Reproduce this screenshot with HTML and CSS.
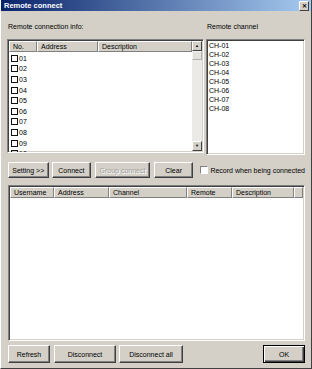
FILE: index.html
```html
<!DOCTYPE html>
<html lang="en">
<head>
    <meta charset="UTF-8">
    <title>Remote connect</title>
    <link rel="stylesheet" href="styles.css">
</head>
<body>
    <div class="window">
        <div class="titlebar">
            <span class="title">Remote connect</span>
            <span class="close">&#x2715;</span>
        </div>

        <div class="content">
            <div class="top">
                <div class="col-left">
                    <div class="label">Remote connection info:</div>
                    <div class="listbox list-info">
                        <div class="grid">
                            <div class="header">
                                <div class="hcell w-no">No.</div>
                                <div class="hcell w-addr">Address</div>
                                <div class="hcell w-desc">Description</div>
                            </div>
                            <div class="rows">
                                <div class="row"><span class="check"></span>01</div>
                                <div class="row"><span class="check"></span>02</div>
                                <div class="row"><span class="check"></span>03</div>
                                <div class="row"><span class="check"></span>04</div>
                                <div class="row"><span class="check"></span>05</div>
                                <div class="row"><span class="check"></span>06</div>
                                <div class="row"><span class="check"></span>07</div>
                                <div class="row"><span class="check"></span>08</div>
                                <div class="row"><span class="check"></span>09</div>
                                <div class="row"><span class="check"></span>10</div>
                            </div>
                        </div>
                        <div class="scrollbar">
                            <div class="sb-btn">&#9650;</div>
                            <div class="sb-thumb"></div>
                            <div class="sb-track"></div>
                            <div class="sb-btn">&#9660;</div>
                        </div>
                    </div>
                </div>
                <div class="col-right">
                    <div class="label">Remote channel</div>
                    <div class="listbox list-channel">
                        <div class="ch">CH-01</div>
                        <div class="ch">CH-02</div>
                        <div class="ch">CH-03</div>
                        <div class="ch">CH-04</div>
                        <div class="ch">CH-05</div>
                        <div class="ch">CH-06</div>
                        <div class="ch">CH-07</div>
                        <div class="ch">CH-08</div>
                    </div>
                </div>
            </div>

            <div class="btn-row">
                <button class="btn b-setting">Setting &gt;&gt;</button>
                <button class="btn b-connect">Connect</button>
                <button class="btn b-group" disabled>Group connect</button>
                <button class="btn b-clear">Clear</button>
                <label class="record"><span class="box"></span>Record when being connected</label>
            </div>

            <div class="listbox list-users">
                <div class="header">
                    <div class="hcell u-user">Username</div>
                    <div class="hcell u-addr">Address</div>
                    <div class="hcell u-chan">Channel</div>
                    <div class="hcell u-remote">Remote</div>
                    <div class="hcell u-desc">Description</div>
                    <div class="hcell u-rest"></div>
                </div>
            </div>

            <div class="footer">
                <button class="btn f-refresh">Refresh</button>
                <button class="btn f-disc">Disconnect</button>
                <button class="btn f-discall">Disconnect all</button>
                <div class="spacer"></div>
                <button class="btn f-ok">OK</button>
            </div>
        </div>
    </div>
</body>
</html>
```

FILE: styles.css
```css
body {
    margin: 0;
    font-family: "Liberation Sans", Arial, sans-serif;
    font-size: 7px;
    color: #000;
}
.window {
    width: 312px;
    height: 369px;
    background-color: #d4d0c8;
    box-sizing: border-box;
    border-left: 1px solid #ffffff;
    border-right: 1px solid #404040;
    border-bottom: 1px solid #404040;
}
.titlebar {
    height: 11px;
    display: flex;
    align-items: center;
    justify-content: space-between;
    padding: 0 2px 0 3px;
    background: linear-gradient(to right, #0a246a, #a6caf0);
}
.title {
    color: #fff;
    font-weight: bold;
    font-size: 7.5px;
}
.close {
    width: 8px;
    height: 8px;
    background-color: #d4d0c8;
    border: 1px solid;
    border-color: #fff #404040 #404040 #fff;
    font-size: 6px;
    line-height: 8px;
    text-align: center;
    font-weight: bold;
}
.content {
    padding: 0 6px 0 6px;
    display: flex;
    flex-direction: column;
}
.top {
    display: flex;
    gap: 2px;
    align-items: flex-start;
}
.label {
    height: 10px;
    line-height: 10px;
    margin-top: 11px;
    margin-bottom: 7px;
    padding-left: 1px;
}
.col-left {
    width: 197px;
}
.col-right {
    width: 99px;
}
.listbox {
    background-color: #fff;
    box-sizing: border-box;
    border: 1px solid;
    border-color: #808080 #fff #fff #808080;
    box-shadow: inset 1px 1px 0 #404040, inset -1px -1px 0 #d4d0c8;
    padding: 1px;
}
.list-info {
    height: 114px;
    display: flex;
    overflow: hidden;
}
.grid {
    flex: 1;
}
.header {
    display: flex;
    height: 11px;
}
.hcell {
    box-sizing: border-box;
    background-color: #d4d0c8;
    border: 1px solid;
    border-color: #fff #808080 #808080 #fff;
    padding-left: 3px;
    line-height: 9px;
    white-space: nowrap;
    overflow: hidden;
}
.w-no { width: 28px; }
.w-addr { width: 61px; }
.w-desc { flex: 1; }
.rows {
    padding-top: 1px;
}
.row {
    height: 10.6px;
    display: flex;
    align-items: center;
    padding-left: 2px;
}
.check {
    width: 7px;
    height: 7px;
    box-sizing: border-box;
    border: 1.5px solid #111;
    margin-right: 1px;
}
.scrollbar {
    width: 10px;
    display: flex;
    flex-direction: column;
}
.sb-btn, .sb-thumb {
    box-sizing: border-box;
    background-color: #d4d0c8;
    border: 1px solid;
    border-color: #fff #404040 #404040 #fff;
    height: 10px;
    font-size: 4px;
    line-height: 8px;
    text-align: center;
}
.sb-thumb {
    height: 9px;
    background-color: #e4e2dc;
    border-color: #f4f4f4 #b0b0b0 #b0b0b0 #f4f4f4;
}
.sb-track {
    flex: 1;
    background-color: #eceae6;
}
.list-channel {
    height: 116px;
    padding: 1px 2px;
}
.ch {
    height: 9px;
    line-height: 9px;
}
.btn-row {
    display: flex;
    align-items: center;
    margin-top: 7px;
    height: 16px;
}
.btn {
    font-family: "Liberation Sans", Arial, sans-serif;
    font-size: 7px;
    color: #000;
    background-color: #d4d0c8;
    box-sizing: border-box;
    border: 1px solid;
    border-color: #fff #404040 #404040 #fff;
    box-shadow: inset -1px -1px 0 #808080;
    padding: 0;
    height: 16px;
}
.btn:disabled {
    color: #a0a0a0;
    text-shadow: 1px 1px 0 #fff;
}
.b-setting { width: 43px; margin-left: 1px; }
.b-connect { width: 42px; margin-left: 3px; }
.b-group { width: 58px; margin-left: 4px; }
.b-clear { width: 42px; margin-left: 4px; }
.record {
    display: flex;
    align-items: center;
    margin-left: 7px;
    white-space: nowrap;
}
.box {
    width: 8px;
    height: 8px;
    box-sizing: border-box;
    background-color: #fff;
    border: 1px solid;
    border-color: #808080 #fff #fff #808080;
    margin-right: 2px;
}
.list-users {
    height: 156px;
    margin-top: 7px;
    margin-left: 1px;
}
.u-user { width: 44px; }
.u-addr { width: 55px; }
.u-chan { width: 78px; }
.u-remote { width: 45px; }
.u-desc { width: 62px; }
.u-rest { flex: 1; }
.footer {
    display: flex;
    margin-top: 4px;
    height: 18px;
}
.footer .btn {
    height: 18px;
}
.f-refresh { width: 42px; margin-left: 1px; }
.f-disc { width: 62px; margin-left: 4px; }
.f-discall { width: 64px; margin-left: 3px; }
.spacer { flex: 1; }
.f-ok {
    width: 42px;
    border: 1px solid #000;
    box-shadow: inset 1px 1px 0 #fff, inset -1px -1px 0 #404040, inset -2px -2px 0 #808080;
}
```
